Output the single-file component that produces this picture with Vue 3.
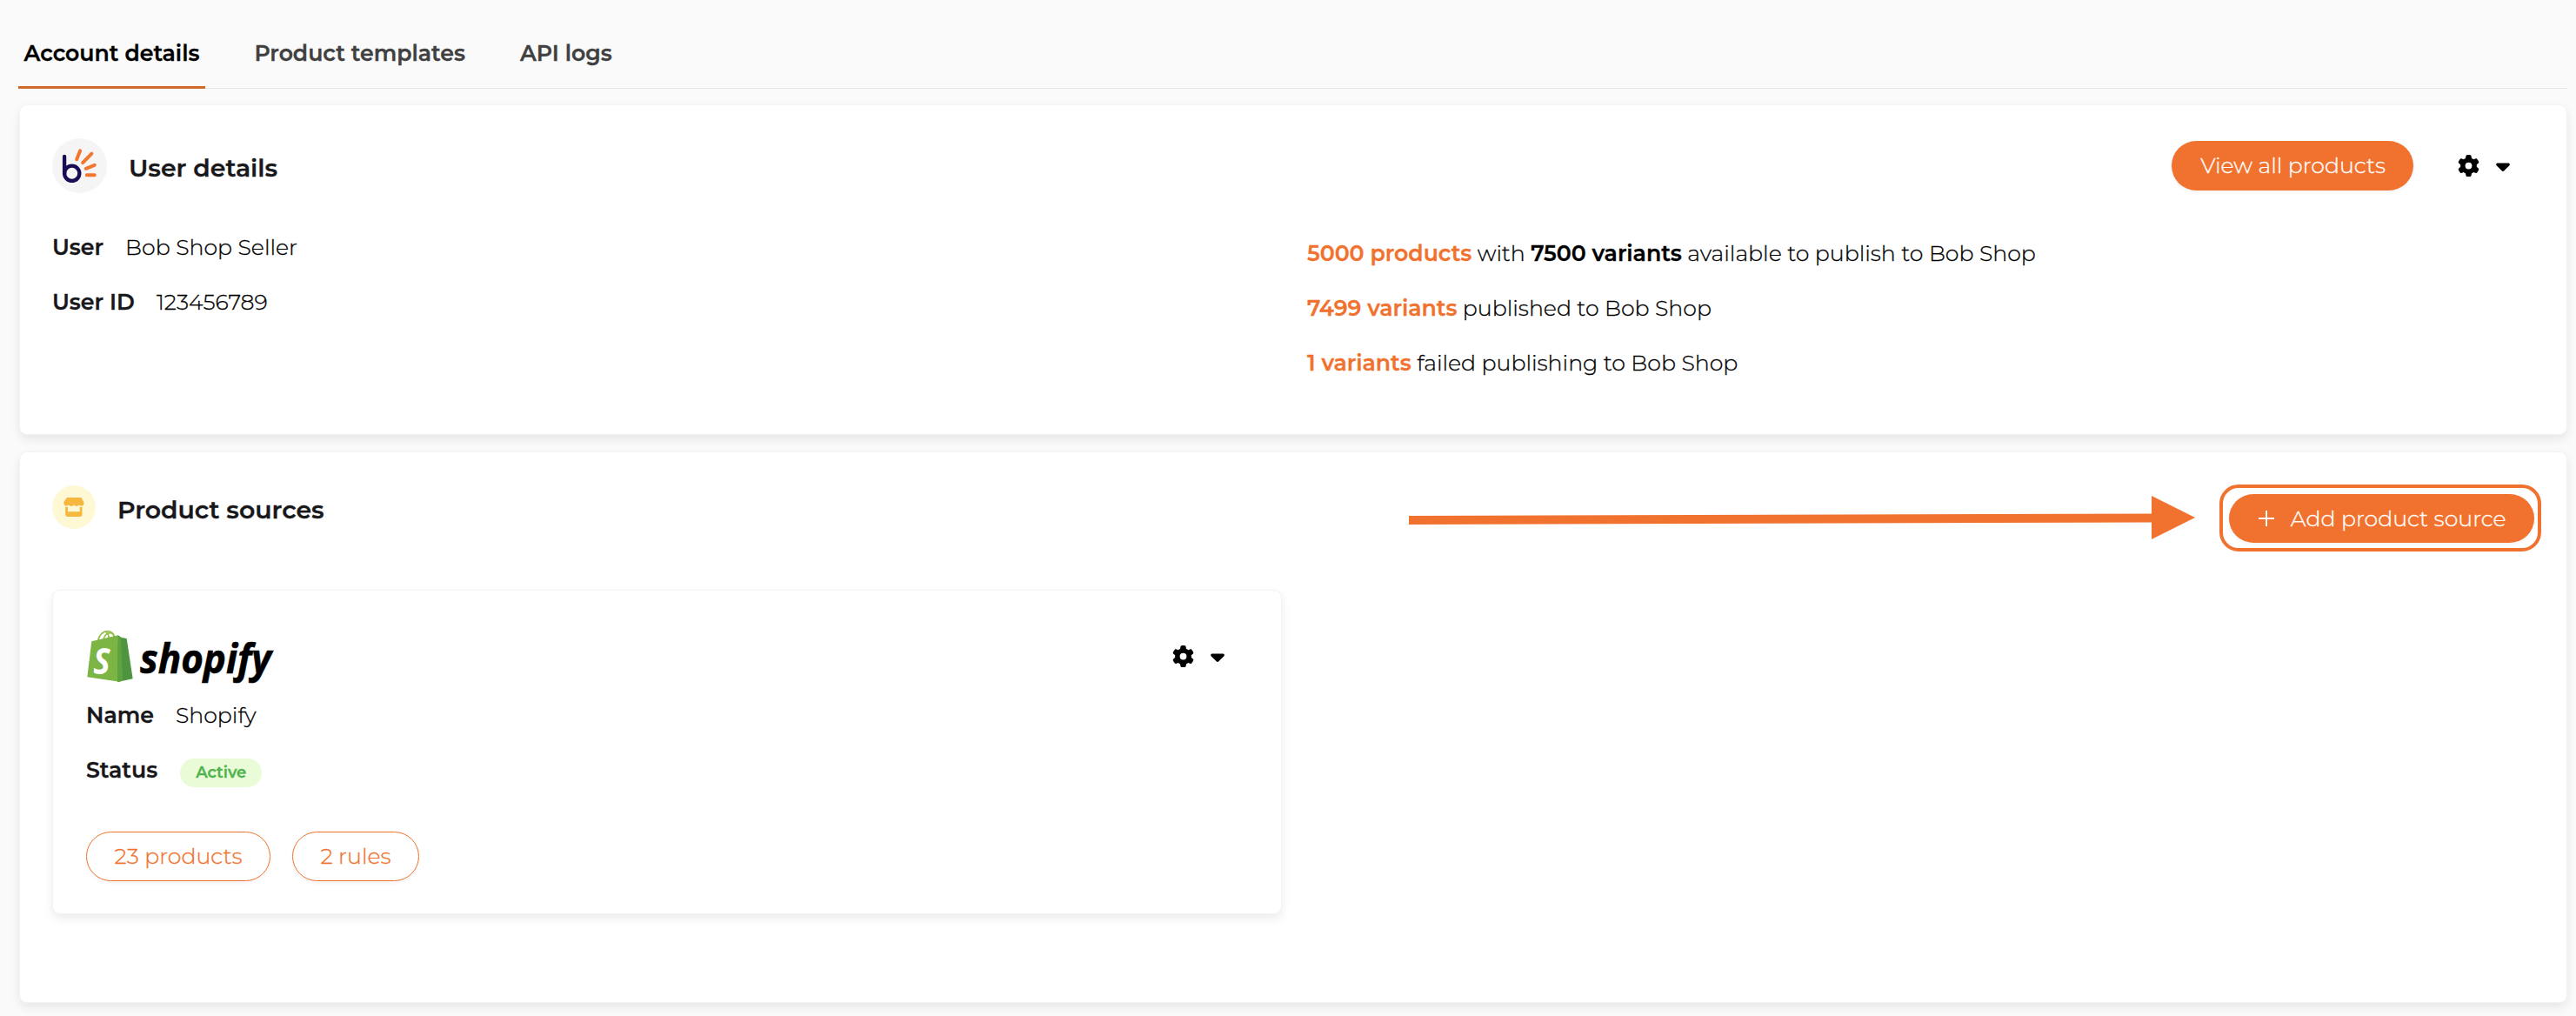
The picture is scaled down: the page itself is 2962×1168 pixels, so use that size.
<template>
  <div class="account-page">
    <nav class="tabs">
      <button
        v-for="tab in tabs"
        :key="tab"
        class="tab"
        :class="{ active: activeTab === tab }"
        @click="activeTab = tab"
      >{{ tab }}</button>
    </nav>

    <section class="card user-card">
      <header class="card-header">
        <div class="card-title">
          <svg class="bob-logo" viewBox="30 56 190 190">
            <circle cx="125" cy="151" r="95" fill="#f5f5f5" />
            <g fill="none" stroke-linecap="round">
              <path d="M72.500 119V178" stroke="#1b0b54" stroke-width="13" />
              <circle cx="98.500" cy="177.500" r="26" stroke="#1b0b54" stroke-width="13" />
              <path d="M127 99L115 129M167 109L136 141M177 149L147 161M150 183.500H177" stroke="#f3762f" stroke-width="12" />
            </g>
          </svg>
          <h2>User details</h2>
        </div>
        <div class="card-actions">
          <button class="btn primary">View all products</button>
          <button class="btn-settings">
            <svg class="icon-gear" viewBox="0 0 512 512"><path :d="gearPath" /></svg>
            <svg class="icon-caret" viewBox="0 0 320 512"><path :d="caretPath" /></svg>
          </button>
        </div>
      </header>

      <div class="user-body">
        <div class="fields">
          <p v-for="field in userFields" :key="field.label" class="field">
            <span class="label">{{ field.label }}</span>
            <span>{{ field.value }}</span>
          </p>
        </div>
        <div class="stats">
          <p><b>5000 products</b> with <b class="dark">7500 variants</b> available to publish to Bob Shop</p>
          <p><b>7499 variants</b> published to Bob Shop</p>
          <p><b>1 variants</b> failed publishing to Bob Shop</p>
        </div>
      </div>
    </section>

    <section class="card sources-card">
      <header class="card-header">
        <div class="card-title">
          <span class="store-badge">
            <svg viewBox="0 0 24 22">
              <path d="M3.900 0H20.400L23.200 4.800C24.200 7 23 9.600 20.600 9.600Q19 9.600 17.800 8.500Q16.500 9.900 14.900 9.900Q13.200 9.900 11.900 8.600Q10.600 9.900 9 9.900Q7.300 9.900 6 8.500Q4.900 9.600 3.300 9.600C.9 9.600-.3 7 .6 4.800Z" />
              <path d="M2.200 10.800Q3.700 11.100 5 10.500V16.200H18.800V10.500Q20.200 11.100 21.500 10.800V19.600Q21.500 22 19.100 22H4.600Q2.200 22 2.200 19.600Z" />
            </svg>
          </span>
          <h2>Product sources</h2>
        </div>
        <div class="highlight">
          <button class="btn primary add">
            <svg class="icon-plus" viewBox="0 0 18 18"><path d="M9 0V18M0 9H18" /></svg>
            Add product source
          </button>
        </div>
      </header>

      <svg class="arrow" viewBox="0 0 904 50">
        <path d="M0 23L860 20.500V30.500L0 33Z" />
        <path d="M854 0L904 25L854 50Z" />
      </svg>

      <article class="card source">
        <div class="source-top">
          <svg class="shopify-logo" viewBox="0 0 214 68">
            <g transform="translate(-10 -12) scale(.33333)">
              <g fill="none" stroke="#95bf47" stroke-width="5">
                <path d="M68 77C72 56 86 43 102 44C116 45 123 54 126 66" />
                <path d="M86 73C92 56 102 49 112 50C122 52 124 60 125 66" />
                <path d="M106 68C105 57 101 50 96 46" />
              </g>
              <path d="M46 79L137 58L142 218L31 202Z" fill="#7db544" />
              <path d="M137 58L150 66L167 69L188 208L136 219Z" fill="#4f9540" />
              <path d="M137 58L147 66L153 215L136 219Z" fill="#5fa341" />
              <text x="52" y="193" fill="#fff" font-size="122" textLength="58" lengthAdjust="spacingAndGlyphs">S</text>
            </g>
            <text class="wordmark" x="61" y="51" font-size="47" textLength="151" lengthAdjust="spacingAndGlyphs">shopify</text>
          </svg>
          <button class="btn-settings">
            <svg class="icon-gear" viewBox="0 0 512 512"><path :d="gearPath" /></svg>
            <svg class="icon-caret" viewBox="0 0 320 512"><path :d="caretPath" /></svg>
          </button>
        </div>
        <p class="field"><span class="label">Name</span><span>Shopify</span></p>
        <p class="field"><span class="label">Status</span><span class="status">Active</span></p>
        <div class="source-actions">
          <button class="btn outline">23 products</button>
          <button class="btn outline">2 rules</button>
        </div>
      </article>
    </section>
  </div>
</template>

<script setup>
import { ref } from 'vue'

const tabs = ['Account details', 'Product templates', 'API logs']
const activeTab = ref('Account details')

const userFields = [
  { label: 'User', value: 'Bob Shop Seller' },
  { label: 'User ID', value: '123456789' }
]

const gearPath = 'M495.9 166.6c3.2 8.7 .5 18.4-6.4 24.6l-43.3 39.4c1.1 8.3 1.700 16.800 1.700 25.400s-.6 17.100-1.700 25.400l43.300 39.400c6.900 6.200 9.600 15.900 6.400 24.600c-4.400 11.900-9.700 23.300-15.800 34.300l-4.700 8.100c-6.600 11-14 21.400-22.100 31.200c-5.900 7.200-15.700 9.600-24.500 6.800l-55.700-17.700c-13.400 10.300-28.200 18.900-44 25.400l-12.500 57.100c-2 9.100-9 16.300-18.200 17.800c-13.800 2.300-28 3.500-42.500 3.500s-28.700-1.200-42.500-3.500c-9.200-1.500-16.200-8.700-18.200-17.800l-12.500-57.100c-15.800-6.500-30.600-15.100-44-25.400L83.100 425.900c-8.800 2.800-18.600 .3-24.500-6.800c-8.100-9.800-15.500-20.200-22.100-31.200l-4.700-8.100c-6.100-11-11.400-22.400-15.800-34.300c-3.200-8.700-.5-18.400 6.400-24.600l43.300-39.400C64.600 273.100 64 264.600 64 256s.6-17.100 1.700-25.400L22.400 191.200c-6.900-6.200-9.600-15.900-6.400-24.600c4.400-11.900 9.700-23.300 15.800-34.300l4.700-8.100c6.600-11 14-21.400 22.100-31.200c5.900-7.200 15.700-9.600 24.500-6.800l55.700 17.700c13.400-10.300 28.200-18.900 44-25.400l12.500-57.100c2-9.100 9-16.300 18.200-17.800C227.300 1.200 241.500 0 256 0s28.700 1.200 42.500 3.500c9.200 1.500 16.200 8.700 18.200 17.800l12.500 57.100c15.800 6.500 30.600 15.100 44 25.400l55.700-17.700c8.800-2.800 18.600-.3 24.500 6.800c8.100 9.800 15.500 20.200 22.100 31.200l4.700 8.100c6.100 11 11.400 22.400 15.800 34.300zM256 336a80 80 0 1 0 0-160 80 80 0 1 0 0 160z'
const caretPath = 'M137.400 374.600c12.500 12.500 32.800 12.500 45.300 0l128-128c9.200-9.200 11.900-22.900 6.900-34.900s-16.600-19.800-29.600-19.800L32 192c-12.900 0-24.600 7.800-29.600 19.800s-2.200 25.700 6.900 34.900l128 128z'
</script>

<style>
body {
  background: #fafafa;
}
</style>

<style scoped>
.account-page {
  box-sizing: border-box;
  min-height: 1168px;
  padding: 0 10px 15px 22px;
  font-family: "Montserrat", "Inter", sans-serif;
  font-size: 25.2px;
  font-weight: 300;
  color: #000;
  -webkit-text-stroke: 0.3px;
}

button {
  font: inherit;
  border: none;
  background: none;
  cursor: pointer;
}

p,
h2 {
  margin: 0;
}

.tabs {
  display: flex;
  gap: 50px;
  box-sizing: border-box;
  height: 102px;
  margin-left: -1px;
  border-bottom: 1px solid #e5e5e5;
}

.tab {
  box-sizing: border-box;
  height: 102px;
  padding: 23px 6.5px 0;
  border-bottom: 3px solid transparent;
  font-weight: 600;
  line-height: 76px;
  color: #404040;
}

.tab.active {
  color: #000;
  border-bottom-color: #cf682c;
}

.card {
  position: relative;
  box-sizing: border-box;
  border: 1px solid #f3f3f3;
  border-radius: 9px;
  background: #fff;
  box-shadow: 0 5px 11px rgba(0, 0, 0, 0.08);
}

.user-card {
  height: 380px;
  margin-top: 18px;
  padding: 38px 37px;
}

.sources-card {
  height: 634px;
  margin-top: 19px;
  padding: 38px 37px;
}

.card-header {
  display: flex;
  justify-content: space-between;
  align-items: flex-start;
}

.card-title {
  display: flex;
  align-items: center;
  gap: 25px;
}

h2 {
  padding-top: 5px;
  font-size: 28.35px;
  font-weight: 600;
  line-height: 36px;
  color: #18181b;
}

.bob-logo {
  width: 63px;
  height: 63px;
}

.card-actions {
  display: flex;
  align-items: center;
  height: 63px;
  gap: 24px;
}

.btn {
  box-sizing: border-box;
  height: 57px;
  padding: 0 32px 0 33px;
  border-radius: 29px;
  line-height: 55px;
  box-shadow: 0 2px 4px rgba(0, 0, 0, 0.05);
}

.btn.primary {
  background: #f0722e;
  color: #fff;
}

.btn.outline {
  padding: 0 31.5px;
  border: 1px solid #f0722e;
  color: #f0722e;
}

.btn-settings {
  display: flex;
  align-items: center;
  gap: 19px;
  padding: 0 28px;
}

.icon-gear,
.icon-caret {
  width: 25px;
  height: 25.2px;
}

.icon-caret {
  width: 16px;
}

.card-actions .btn-settings {
  padding-left: 27px;
}

.user-body {
  display: grid;
  grid-template-columns: 1443px 1fr;
  margin-top: 31px;
}

.stats {
  padding-top: 7px;
}

.stats p,
.field {
  line-height: 63px;
  white-space: nowrap;
}

.stats b {
  font-weight: 600;
  color: #f0722e;
}

.stats b.dark {
  color: #000;
}

.field {
  display: flex;
  align-items: center;
  gap: 25px;
}

.label {
  font-weight: 600;
  color: #18181b;
}

.store-badge {
  display: flex;
  align-items: center;
  justify-content: center;
  width: 50px;
  height: 50px;
  border-radius: 50%;
  background: #fef8d5;
}

.store-badge svg {
  width: 24px;
  height: 22px;
  fill: #f6b73e;
}

/* ring drawn around the call to action */
.highlight {
  position: relative;
  margin-top: 10px;
}

.highlight::after {
  content: '';
  position: absolute;
  inset: -11px -8px -10px -11px;
  border: 4px solid #f0722e;
  border-radius: 22px;
  pointer-events: none;
}

.btn.add {
  display: flex;
  align-items: center;
  gap: 19px;
  height: 56px;
  padding: 0 32.5px 0 33.5px;
  line-height: 54px;
}

.icon-plus {
  width: 18px;
  height: 18px;
  fill: none;
  stroke: #fff;
  stroke-width: 2;
}

.arrow {
  position: absolute;
  left: 1597px;
  top: 50px;
  width: 904px;
  height: 50px;
  fill: #f0722e;
}

.source {
  width: 1414px;
  height: 373px;
  margin-top: 54px;
  padding: 0 38px;
}

.source-top {
  display: flex;
  justify-content: space-between;
  align-items: center;
  height: 69px;
  padding-top: 43px;
}

.source-top .btn-settings {
  padding: 0 27px 4px 0;
}

.shopify-logo {
  width: 214px;
  height: 68px;
  margin-left: 1px;
  overflow: visible;
}

.shopify-logo text {
  font-family: "Open Sans", "Noto Sans", sans-serif;
  font-weight: 700;
  font-style: italic;
}

.shopify-logo .wordmark {
  stroke: #000;
  stroke-width: 0.7px;
}

.status {
  height: 33px;
  margin: 5px 0 0 1px;
  padding: 0 18px;
  border-radius: 17px;
  background: #eafcd7;
  font-size: 18px;
  font-weight: 600;
  line-height: 32px;
  color: #4fb34f;
}

.source-actions {
  display: flex;
  gap: 25px;
  margin-top: 39px;
}
</style>
